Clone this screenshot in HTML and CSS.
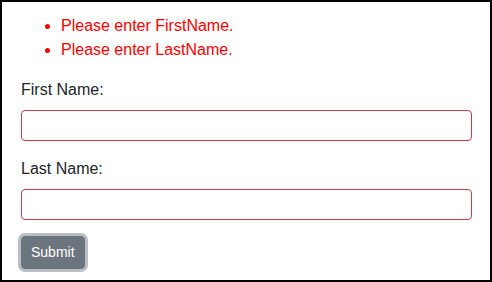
FILE: index.html
```html
<!DOCTYPE html>
<html lang="en">
<head>
  <meta charset="UTF-8" />
  <meta name="viewport" content="width=device-width, initial-scale=1" />
  <title>Name Form</title>
  <link rel="stylesheet" href="styles.css">
</head>
<body>

  <div class="frame">
    <ul class="errors">
      <li>Please enter FirstName.</li>
      <li>Please enter LastName.</li>
    </ul>

    <form class="name-form">
      <div class="form-group">
        <label for="firstName">First Name:</label>
        <input type="text" id="firstName" class="form-control is-invalid">
      </div>
      <div class="form-group">
        <label for="lastName">Last Name:</label>
        <input type="text" id="lastName" class="form-control is-invalid">
      </div>
      <button type="button" class="btn btn-secondary focus">Submit</button>
    </form>
  </div>

</body>
</html>
```

FILE: styles.css
```css
  html, body {
    margin: 0;
    padding: 0;
  }
  body {
    font-family: "Liberation Sans", Arial, sans-serif;
    font-size: 16px;
    line-height: 1.5;
    color: #212529;
    background: #fff;
  }
  .frame {
    box-sizing: border-box;
    width: 492px;
    height: 282px;
    border: 2px solid #000;
    padding: 12px 18px 0 19px;
  }
  .errors {
    margin: 0 0 16px;
    padding-left: 40px;
    color: #f00;
  }
  .form-group {
    margin-bottom: 16px;
  }
  .form-group label {
    display: block;
    margin-bottom: 8px;
  }
  .form-control {
    display: block;
    box-sizing: border-box;
    width: 100%;
    height: 31px;
    padding: 4px 8px;
    font-family: inherit;
    font-size: 14px;
    border: 1px solid #cc3a4d;
    border-radius: 4px;
    background: #fff;
    margin: 0;
  }
  .btn {
    font-family: inherit;
    font-size: 14px;
    line-height: 1.5;
    padding: 5px 9px;
    border: 1px solid transparent;
    border-radius: 4px;
    cursor: pointer;
    margin: 0;
  }
  .btn-secondary {
    color: #fff;
    background-color: #6c757d;
    border-color: #6c757d;
  }
  .btn.focus {
    box-shadow: 0 0 0 3px #b9bfc4;
  }
```
